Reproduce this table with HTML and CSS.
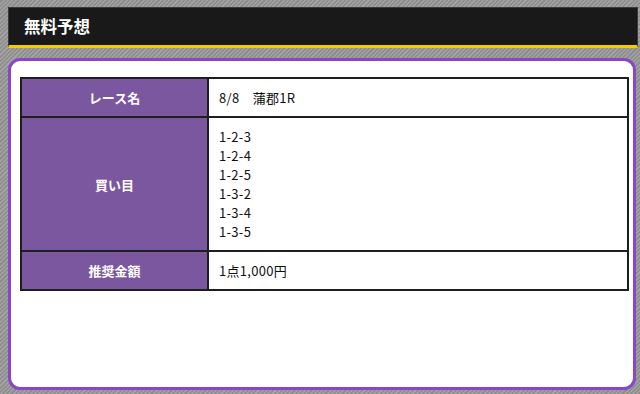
FILE: index.html
```html
<!DOCTYPE html>
<html lang="ja">
<head>
<meta charset="utf-8">
<title>無料予想</title>
<link rel="stylesheet" href="styles.css">
</head>
<body>
<div class="page">
  <div class="head">
    <h2 class="head-title">無料予想</h2>
  </div>
  <div class="card">
    <table class="info">
      <tr>
        <th class="label">レース名</th>
        <td class="value">8/8　蒲郡1R</td>
      </tr>
      <tr>
        <th class="label">買い目</th>
        <td class="value">1-2-3<br>1-2-4<br>1-2-5<br>1-3-2<br>1-3-4<br>1-3-5</td>
      </tr>
      <tr>
        <th class="label">推奨金額</th>
        <td class="value">1点1,000円</td>
      </tr>
    </table>
  </div>
</div>
</body>
</html>
```
FILE: styles.css
```css
html, body {
  margin: 0;
  padding: 0;
}
body {
  width: 640px;
  height: 394px;
  overflow: hidden;
  background: repeating-linear-gradient(-45deg, #8d8d8d 0px, #8d8d8d 1.5px, #a2a2a2 1.5px, #a2a2a2 3px);
  font-family: "Noto Sans CJK JP", "Noto Sans", sans-serif;
}
.page {
  padding: 7px 2px 0 8px;
}
.head {
  background: #191919;
  border: 1px solid #3a3a3a;
  border-bottom: 3px solid #f5cc00;
  height: 37px;
  display: flex;
  align-items: center;
  padding-left: 15px;
}
.head-title {
  margin: 0;
  color: #fff;
  font-size: 16.5px;
  font-weight: bold;
  line-height: 1;
}
.card {
  margin-top: 10px;
  margin-right: 2px;
  background: #fff;
  border: 3px solid #8a45c9;
  border-radius: 12px;
  height: 332px;
  box-sizing: border-box;
  padding: 16px 6px 0 9px;
}
.info {
  width: 609px;
  border-collapse: collapse;
  border: 2px solid #1e1e1e;
}
.info th, .info td {
  border: 2px solid #1e1e1e;
  font-size: 13px;
  line-height: 19px;
}
.label {
  width: 185px;
  background: #7b579f;
  color: #fff;
  font-weight: bold;
  font-size: 12px;
  text-align: center;
  padding: 9px 0;
}
.value {
  color: #111;
  text-align: left;
  padding: 9px 10px;
  letter-spacing: 0.3px;
}
```
